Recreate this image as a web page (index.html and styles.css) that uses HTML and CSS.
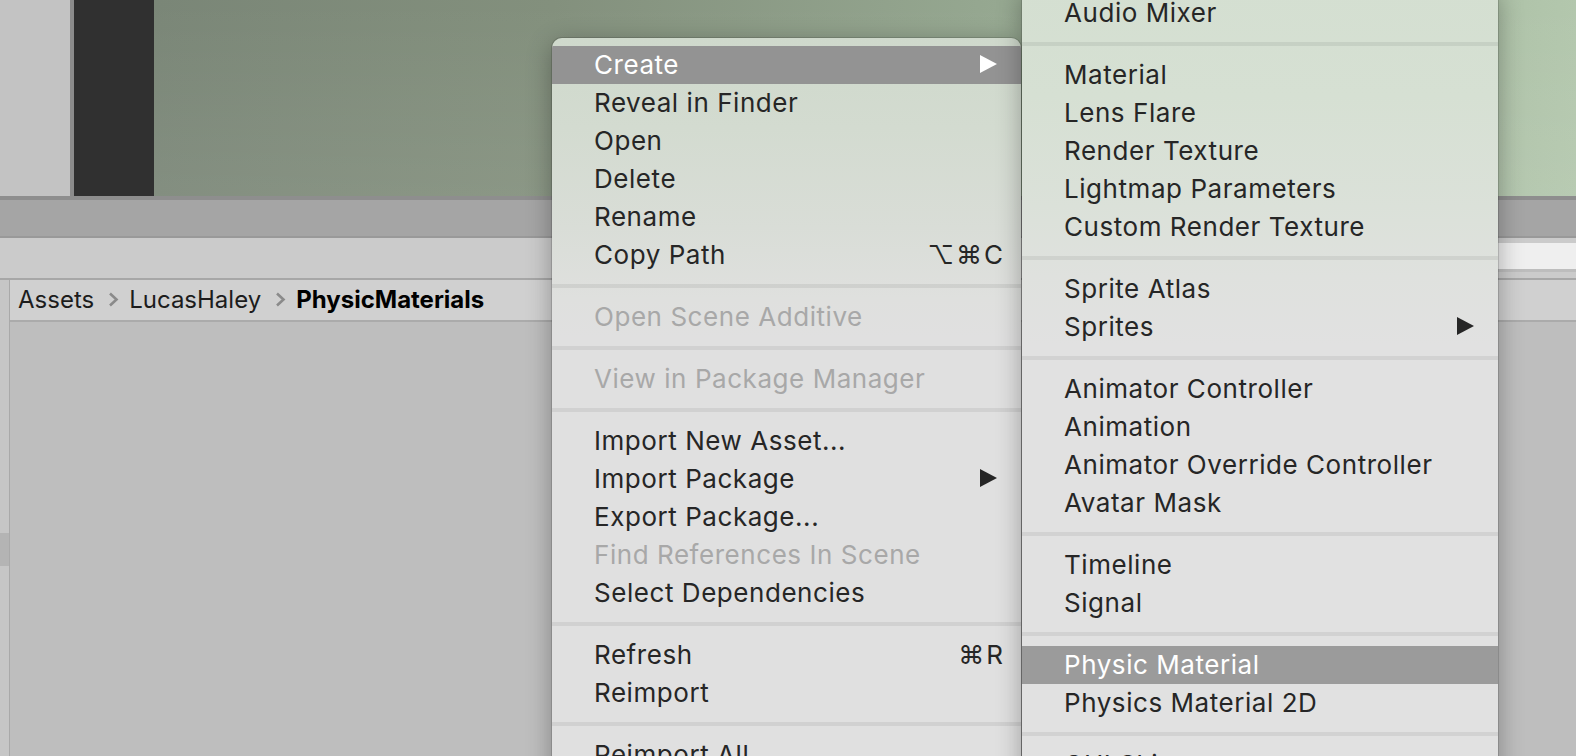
FILE: index.html
```html
<!DOCTYPE html>
<html>
<head>
<meta charset="utf-8">
<title>Project - Context Menu</title>
<link rel="stylesheet" href="styles.css">
</head>
<body>
<div class="app">
  <div class="top">
    <div class="strip"></div>
    <div class="darkpanel"></div>
    <div class="scene"></div>
  </div>
  <div class="toolbar"></div>
  <div class="searchrow"><div class="search"></div></div>
  <div class="project">
    <div class="side"><div class="side-mark"></div></div>
    <div class="main">
      <div class="crumbs">
        <span class="crumb">Assets</span>
        <svg class="chev" width="11" height="15" viewBox="0 0 11 15"><polyline points="2,1.5 8.5,7.5 2,13.5" fill="none" stroke="#8a8a8a" stroke-width="2.6"/></svg>
        <span class="crumb">LucasHaley</span>
        <svg class="chev" width="11" height="15" viewBox="0 0 11 15"><polyline points="2,1.5 8.5,7.5 2,13.5" fill="none" stroke="#8a8a8a" stroke-width="2.6"/></svg>
        <span class="crumb current">PhysicMaterials</span>
      </div>
      <div class="content"></div>
    </div>
  </div>
</div>

<div class="menu menu-main">
  <div class="item active"><span class="label">Create</span><svg class="arrow" width="17" height="18" viewBox="0 0 17 18"><polygon points="0,0 17,9 0,18" fill="#fff"/></svg></div>
  <div class="item"><span class="label">Reveal in Finder</span></div>
  <div class="item"><span class="label">Open</span></div>
  <div class="item"><span class="label">Delete</span></div>
  <div class="item"><span class="label">Rename</span></div>
  <div class="item"><span class="label">Copy Path</span><span class="key">⌥⌘C</span></div>
  <div class="sep"></div>
  <div class="item disabled"><span class="label">Open Scene Additive</span></div>
  <div class="sep"></div>
  <div class="item disabled"><span class="label">View in Package Manager</span></div>
  <div class="sep"></div>
  <div class="item"><span class="label">Import New Asset...</span></div>
  <div class="item"><span class="label">Import Package</span><svg class="arrow" width="17" height="18" viewBox="0 0 17 18"><polygon points="0,0 17,9 0,18" fill="#262626"/></svg></div>
  <div class="item"><span class="label">Export Package...</span></div>
  <div class="item disabled"><span class="label">Find References In Scene</span></div>
  <div class="item"><span class="label">Select Dependencies</span></div>
  <div class="sep"></div>
  <div class="item"><span class="label">Refresh</span><span class="key">⌘R</span></div>
  <div class="item"><span class="label">Reimport</span></div>
  <div class="sep"></div>
  <div class="item"><span class="label">Reimport All</span></div>
</div>

<div class="menu menu-sub">
  <div class="item"><span class="label">Audio Mixer</span></div>
  <div class="sep"></div>
  <div class="item"><span class="label">Material</span></div>
  <div class="item"><span class="label">Lens Flare</span></div>
  <div class="item"><span class="label">Render Texture</span></div>
  <div class="item"><span class="label">Lightmap Parameters</span></div>
  <div class="item"><span class="label">Custom Render Texture</span></div>
  <div class="sep"></div>
  <div class="item"><span class="label">Sprite Atlas</span></div>
  <div class="item"><span class="label">Sprites</span><svg class="arrow" width="17" height="18" viewBox="0 0 17 18"><polygon points="0,0 17,9 0,18" fill="#262626"/></svg></div>
  <div class="sep"></div>
  <div class="item"><span class="label">Animator Controller</span></div>
  <div class="item"><span class="label">Animation</span></div>
  <div class="item"><span class="label">Animator Override Controller</span></div>
  <div class="item"><span class="label">Avatar Mask</span></div>
  <div class="sep"></div>
  <div class="item"><span class="label">Timeline</span></div>
  <div class="item"><span class="label">Signal</span></div>
  <div class="sep"></div>
  <div class="item active alt"><span class="label">Physic Material</span></div>
  <div class="item"><span class="label">Physics Material 2D</span></div>
  <div class="sep"></div>
  <div class="item"><span class="label">GUI Skin</span></div>
</div>
</body>
</html>
```

FILE: styles.css
```css
* { box-sizing: border-box; }
html, body {
  margin: 0;
  padding: 0;
  width: 1576px;
  height: 756px;
  overflow: hidden;
  background: #bebebe;
  font-family: "Inter", "DejaVu Sans", sans-serif;
}
.app {
  display: flex;
  flex-direction: column;
  width: 1576px;
  height: 756px;
}
.top {
  display: flex;
  height: 200px;
  border-bottom: 4px solid #8e8e8e;
  flex: none;
}
.strip {
  width: 74px;
  background: #c3c3c3;
  border-right: 4px solid #8b8b8b;
}
.darkpanel {
  width: 80px;
  background: #303030;
}
.scene {
  flex: 1;
  background:
    linear-gradient(180deg, rgba(255,255,255,0) 0%, rgba(255,255,255,0.07) 100%),
    linear-gradient(90deg, #7a8677 0%, #83907d 28%, #95a790 58%, #a9bda3 88%, #b3c7ad 100%);
}
.toolbar {
  height: 38px;
  flex: none;
  background: #a5a5a5;
  border-bottom: 2px solid #999999;
}
.searchrow {
  height: 42px;
  flex: none;
  display: flex;
  background: #cbcbcb;
  border-bottom: 2px solid #a7a7a7;
  padding-top: 5px;
}
.search {
  margin-left: auto;
  width: 330px;
  height: 29px;
  background: #efefef;
  border-bottom: 3px solid #bdbdbd;
}
.project {
  flex: 1;
  display: flex;
}
.side {
  width: 10px;
  background: #c6c6c6;
  border-right: 1px solid #a9a9a9;
}
.side-mark {
  margin-top: 253px;
  height: 33px;
  background: #b4b4b4;
}
.main {
  flex: 1;
  display: flex;
  flex-direction: column;
}
.crumbs {
  height: 42px;
  display: flex;
  align-items: center;
  padding-left: 8px;
  padding-bottom: 1px;
  background: #d0d0d0;
  border-bottom: 2px solid #ababab;
  font-size: 24px;
  color: #1c1c1c;
}
.crumb.current {
  font-weight: 700;
  color: #000;
}
.chev {
  margin: 0 10px 0 14px;
}
.content {
  flex: 1;
  background: #bebebe;
}

/* context menus (overlays) */
.menu {
  position: absolute;
  padding: 8px 0;
  border-radius: 10px;
  font-size: 26px;
  letter-spacing: 0.55px;
  color: #262626;
  box-shadow: 0 0 0 1px rgba(0,0,0,0.13), 0 6px 26px rgba(0,0,0,0.32);
  overflow: hidden;
}
.menu-main {
  left: 552px;
  top: 38px;
  width: 469px;
  height: 760px;
  background: linear-gradient(180deg, #cfd9cc 0px, #d3dbd0 90px, #d9ddd7 190px, #dfe0de 260px, #e0e0e0 300px, #e0e0e0 100%);
}
.menu-sub {
  left: 1022px;
  top: -14px;
  width: 476px;
  height: 820px;
  background: linear-gradient(180deg, #d4dfd1 0px, #d6e0d3 110px, #dbe1d9 220px, #dfe1de 290px, #e1e1e1 360px, #e1e1e1 100%);
}
.item {
  display: flex;
  height: 38px;
  line-height: 37px;
  padding: 0 18px 1px 42px;
  white-space: nowrap;
}
.menu-sub .item {
  padding-left: 42px;
}
.item .label {
  flex: 1;
}
.item .key {
  color: #262626;
  letter-spacing: 2px;
  margin-right: -2px;
}
.item .arrow {
  align-self: flex-start;
  margin-top: 9px;
  margin-right: 6px;
}
.item.active {
  background: #939393;
  color: #ffffff;
}
.item.active.alt {
  background: #9b9b9b;
}
.item.disabled {
  color: #a8a8a8;
}
.sep {
  height: 4px;
  margin: 10px 0;
  background: rgba(0,0,0,0.065);
}
```
